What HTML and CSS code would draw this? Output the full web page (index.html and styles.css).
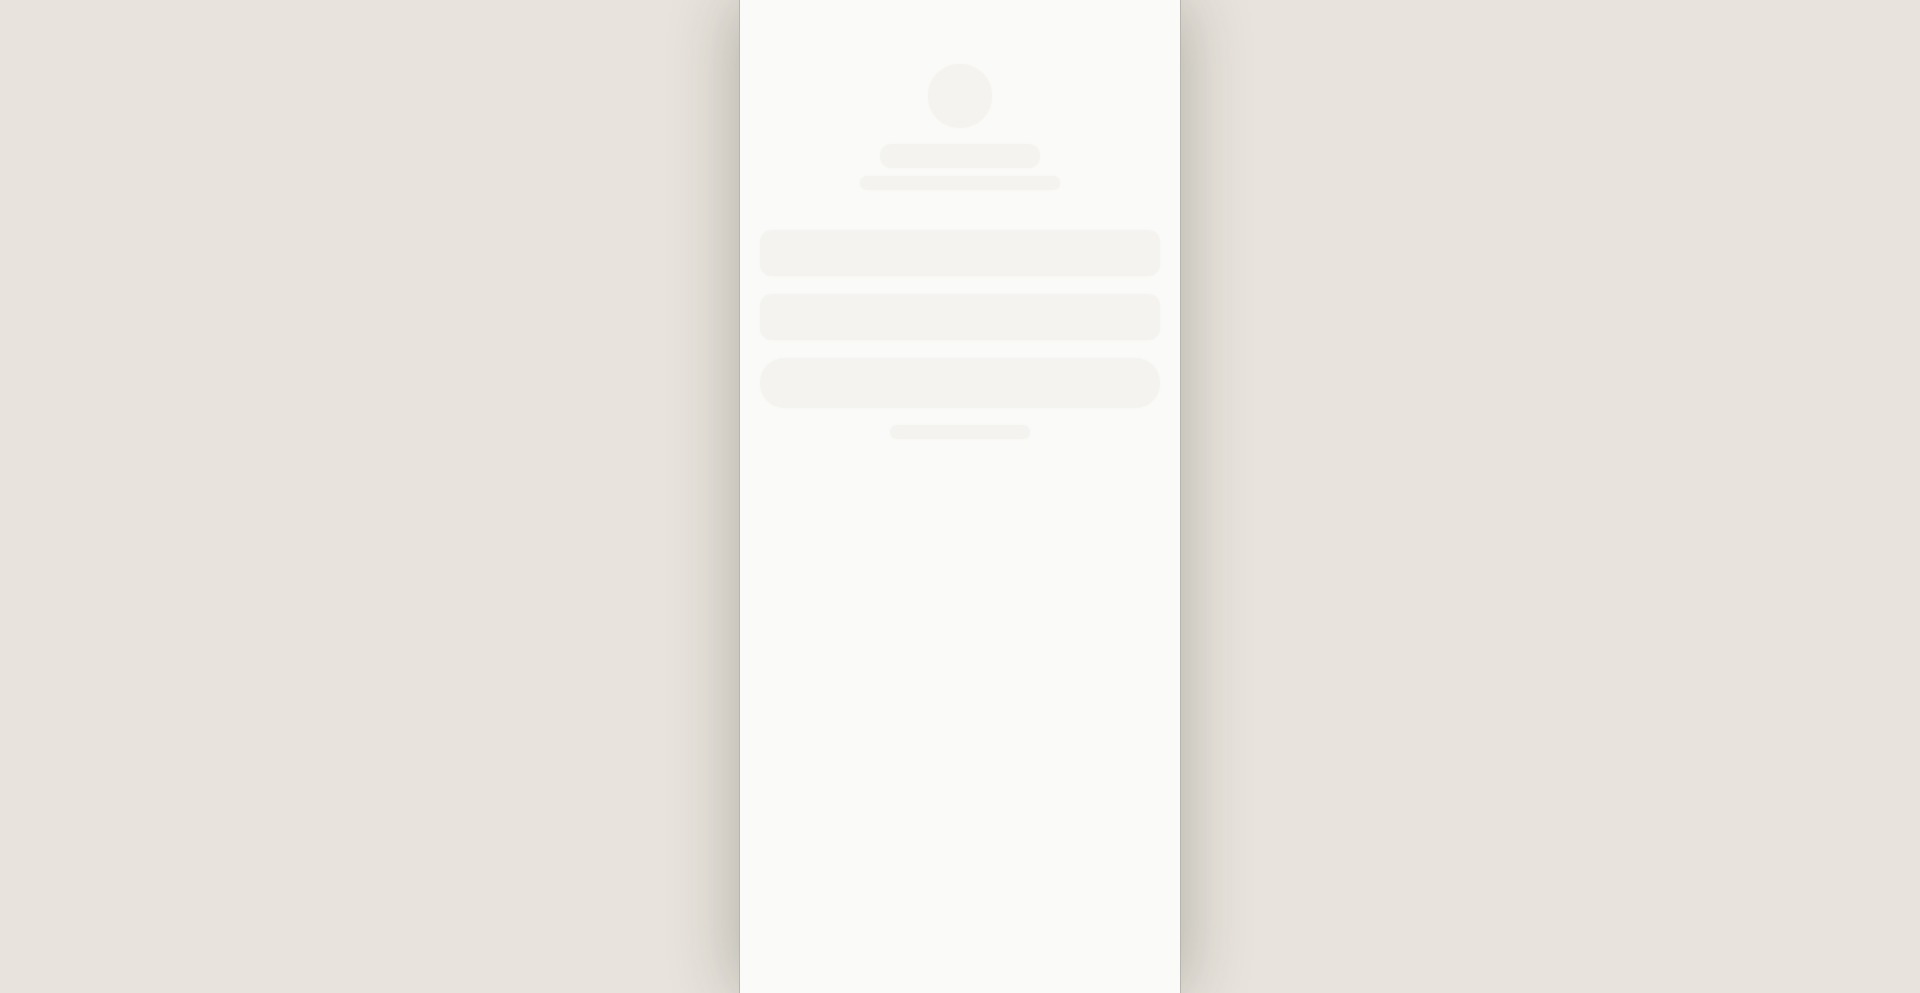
FILE: index.html
```html
<!DOCTYPE html>
<html lang="en">
<head>
<meta charset="utf-8">
<title>Loading</title>
<link rel="stylesheet" href="styles.css">
</head>
<body>
<main class="panel">
  <div class="sk sk-avatar"></div>
  <div class="sk sk-title"></div>
  <div class="sk sk-subtitle"></div>
  <div class="sk sk-input sk-first"></div>
  <div class="sk sk-input"></div>
  <div class="sk sk-button"></div>
  <div class="sk sk-link"></div>
</main>
</body>
</html>
```
FILE: styles.css
```css
html, body {
  margin: 0;
  padding: 0;
  height: 100%;
}
body {
  background: #e8e4dd;
  font-family: "Liberation Sans", Arial, sans-serif;
  overflow: hidden;
}
.panel {
  box-sizing: border-box;
  width: 442px;
  height: 100vh;
  margin: 0 auto;
  background: #fafaf8;
  border-left: 1px solid #b7b5af;
  border-right: 1px solid #b7b5af;
  box-shadow: 0 0 64px rgba(40, 35, 20, 0.3);
  display: flex;
  flex-direction: column;
  align-items: center;
  padding-top: 64px;
}
.sk {
  background: #f4f3ef;
  flex: none;
  box-shadow: 0 0 2px rgba(244, 243, 239, 0.9);
}
.sk-avatar {
  width: 64px;
  height: 64px;
  border-radius: 50%;
}
.sk-title {
  width: 160px;
  height: 24px;
  border-radius: 12px;
  margin-top: 16px;
}
.sk-subtitle {
  width: 200px;
  height: 14px;
  border-radius: 7px;
  margin-top: 8px;
}
.sk-input {
  width: 400px;
  height: 46px;
  border-radius: 12px;
  margin-top: 18px;
}
.sk-first {
  margin-top: 40px;
}
.sk-button {
  width: 400px;
  height: 50px;
  border-radius: 25px;
  margin-top: 18px;
}
.sk-link {
  width: 140px;
  height: 14px;
  border-radius: 7px;
  margin-top: 17px;
}
```
